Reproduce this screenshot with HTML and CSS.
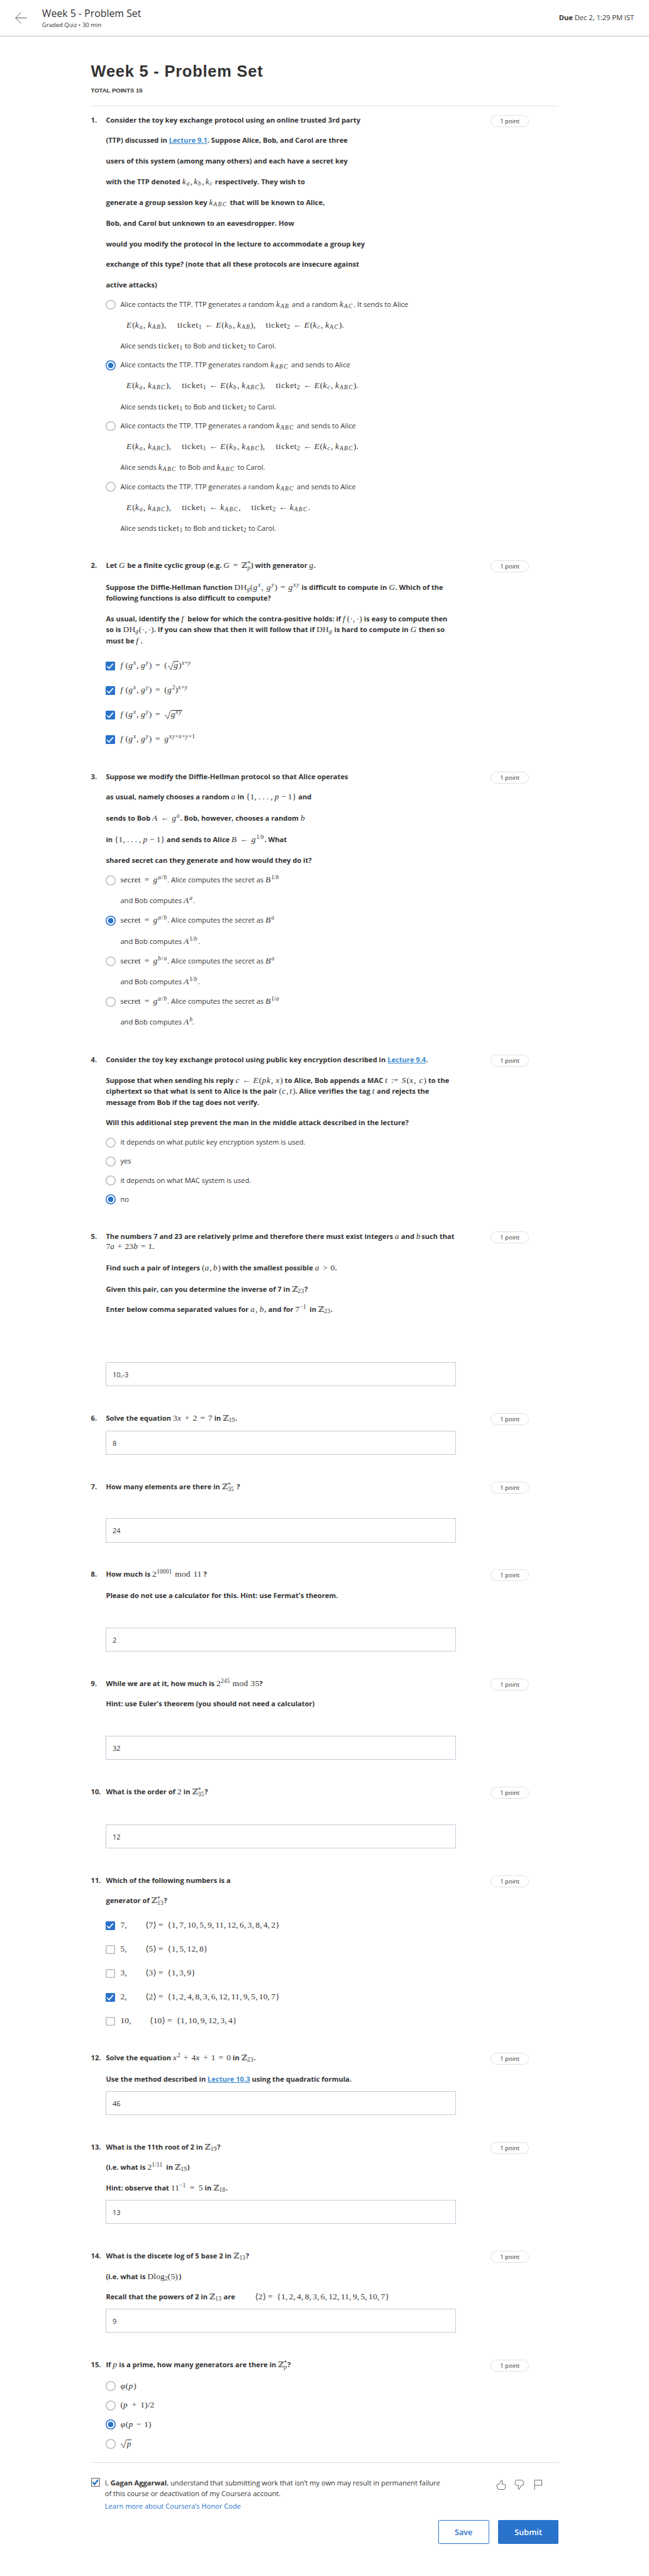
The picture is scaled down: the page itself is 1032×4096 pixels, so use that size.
FILE: index.html
```html
<!DOCTYPE html>
<html lang="en">
<head>
<meta charset="utf-8">
<title>Week 5 - Problem Set</title>
<link rel="stylesheet" href="styles.css">
</head>
<body>
<svg class="defs" width="0" height="0" aria-hidden="true">
  <symbol id="tick" viewBox="0 0 18 18"><path d="M2.8 9.4l4 4.2 8-9.4" fill="none" stroke="#fff" stroke-width="2.1"/></symbol>
  <symbol id="root" viewBox="0 0 13 19"><path d="M1 11.500l2.200-1.600 4 8.100L12.800.6" fill="none" stroke="#333" stroke-width="1"/></symbol>
</svg>
<header class="top">
  <svg class="back" viewBox="0 0 24 24"><path d="M12 .8L1 12l11 11.200M1 12h23" fill="none" stroke="#55585e" stroke-width="1.200"/></svg>
  <div class="crumb"><div class="name">Week 5 - Problem Set</div><div class="kind">Graded Quiz • 30 min</div></div>
  <div class="due"><b>Due</b> Dec 2, 1:29 PM IST</div>
</header>
<main class="page">
<h1>Week 5 - Problem Set</h1>
<div class="total">TOTAL POINTS 15</div>
<hr class="rule">

<section class="q h891 first"><div class="num">1.</div><div class="body">
<div class="l">Consider the toy key exchange protocol using an online trusted 3rd party</div>
<div class="l g20">(TTP) discussed in <a>Lecture 9.1</a>. Suppose Alice, Bob, and Carol are three</div>
<div class="l g20">users of this system (among many others) and each have a secret key</div>
<div class="l g20">with the TTP denoted <span class="m j w62"><i>k<sub>a</sub></i>, <i>k<sub>b</sub></i>, <i>k<sub>c</sub></i></span> respectively. They wish to</div>
<div class="l g21">generate a group session key <span class="m w38"><i>k<sub>ABC</sub></i></span> that will be known to Alice,</div>
<div class="l g21">Bob, and Carol but unknown to an eavesdropper. How</div>
<div class="l g20">would you modify the protocol in the lecture to accommodate a group key</div>
<div class="l g20">exchange of this type? (note that all these protocols are insecure against</div>
<div class="l g20">active attacks)</div>
<div class="o g18"><span class="radio"></span>Alice contacts the TTP. TTP generates a random <span class="m w28"><i>k<sub>AB</sub></i></span> and a random <span class="m w28"><i>k<sub>AC</sub></i></span>. It sends to Alice</div>
<div class="o eq g21"><span class="m w102"><i>E</i>(<i>k<sub>a</sub></i>, <i>k<sub>AB</sub></i>),</span><span class="m w55">ticket<sub>1</sub></span><span class="m w22">←</span><span class="m w100"><i>E</i>(<i>k<sub>b</sub></i>, <i>k<sub>AB</sub></i>),</span><span class="m w55">ticket<sub>2</sub></span><span class="m w22">←</span><span class="m"><i>E</i>(<i>k<sub>c</sub></i>, <i>k<sub>AC</sub></i>).</span></div>
<div class="o in g20">Alice sends <span class="m w49">ticket<sub>1</sub></span> to Bob and <span class="m w49">ticket<sub>2</sub></span> to Carol.</div>
<div class="o g17"><span class="radio on"></span>Alice contacts the TTP. TTP generates random <span class="m w38"><i>k<sub>ABC</sub></i></span> and sends to Alice</div>
<div class="o eq g21"><span class="m w111"><i>E</i>(<i>k<sub>a</sub></i>, <i>k<sub>ABC</sub></i>),</span><span class="m w55">ticket<sub>1</sub></span><span class="m w22">←</span><span class="m w111"><i>E</i>(<i>k<sub>b</sub></i>, <i>k<sub>ABC</sub></i>),</span><span class="m w55">ticket<sub>2</sub></span><span class="m w22">←</span><span class="m"><i>E</i>(<i>k<sub>c</sub></i>, <i>k<sub>ABC</sub></i>).</span></div>
<div class="o in g21">Alice sends <span class="m w49">ticket<sub>1</sub></span> to Bob and <span class="m w49">ticket<sub>2</sub></span> to Carol.</div>
<div class="o g17"><span class="radio"></span>Alice contacts the TTP. TTP generates a random <span class="m w38"><i>k<sub>ABC</sub></i></span> and sends to Alice</div>
<div class="o eq g21"><span class="m w111"><i>E</i>(<i>k<sub>a</sub></i>, <i>k<sub>ABC</sub></i>),</span><span class="m w55">ticket<sub>1</sub></span><span class="m w22">←</span><span class="m w111"><i>E</i>(<i>k<sub>b</sub></i>, <i>k<sub>ABC</sub></i>),</span><span class="m w55">ticket<sub>2</sub></span><span class="m w22">←</span><span class="m"><i>E</i>(<i>k<sub>c</sub></i>, <i>k<sub>ABC</sub></i>).</span></div>
<div class="o in g20">Alice sends <span class="m w38"><i>k<sub>ABC</sub></i></span> to Bob and <span class="m w38"><i>k<sub>ABC</sub></i></span> to Carol.</div>
<div class="o g18"><span class="radio"></span>Alice contacts the TTP. TTP generates a random <span class="m w38"><i>k<sub>ABC</sub></i></span> and sends to Alice</div>
<div class="o eq g21"><span class="m w111"><i>E</i>(<i>k<sub>a</sub></i>, <i>k<sub>ABC</sub></i>),</span><span class="m w55">ticket<sub>1</sub></span><span class="m w22">←</span><span class="m w62"><i>k<sub>ABC</sub></i>,</span><span class="m w55">ticket<sub>2</sub></span><span class="m w22">←</span><span class="m"><i>k<sub>ABC</sub></i>.</span></div>
<div class="o in g20">Alice sends <span class="m w49">ticket<sub>1</sub></span> to Bob and <span class="m w49">ticket<sub>2</sub></span> to Carol.</div>
</div><div class="pt">1 point</div></section>

<section class="q h423"><div class="num">2.</div><div class="body">
<div class="l">Let <span class="m w13"><i>G</i></span> be a finite cyclic group (e.g. <span class="m j w55"><i>G</i> = <span><span class="zz">ℤ</span><span class="ss"><span>*</span><i>p</i></span></span></span>) with generator <span class="m w9"><i>g</i></span>.</div>
<div class="l g23">Suppose the Diffie-Hellman function <span class="m j w131">DH<sub><i>g</i></sub>(<i>g<sup>x</sup></i>, <i>g<sup>y</sup></i>) = <i>g<sup>xy</sup></i></span> is difficult to compute in <span class="m w13"><i>G</i></span>. Which of the</div>
<div class="l g1">following functions is also difficult to compute?</div>
<div class="l g20">As usual, identify the <span class="m w9"><i>f</i></span> below for which the contra-positive holds: if <span class="m j w39"><i>f</i> (·, ·)</span> is easy to compute then</div>
<div class="l g1">so is <span class="m j w62">DH<sub><i>g</i></sub>(·, ·)</span>. If you can show that then it will follow that if <span class="m w32">DH<sub><i>g</i></sub></span> is hard to compute in <span class="m w13"><i>G</i></span> then so</div>
<div class="l g1">must be <span class="m w9"><i>f</i></span>.</div>
<div class="o g29"><span class="box on"><svg><use href="#tick"/></svg></span><span class="m j fn"><i>f</i> (<i>g<sup>x</sup></i>, <i>g<sup>y</sup></i>)</span><span class="m w18">=</span><span class="m">(<svg class="rt"><use href="#root"/></svg><i class="bar">g</i>)<sup><i>x</i>+<i>y</i></sup></span></div>
<div class="o g28"><span class="box on"><svg><use href="#tick"/></svg></span><span class="m j fn"><i>f</i> (<i>g<sup>x</sup></i>, <i>g<sup>y</sup></i>)</span><span class="m w18">=</span><span class="m">(<i>g</i><sup>2</sup>)<sup><i>x</i>+<i>y</i></sup></span></div>
<div class="o g28"><span class="box on"><svg><use href="#tick"/></svg></span><span class="m j fn"><i>f</i> (<i>g<sup>x</sup></i>, <i>g<sup>y</sup></i>)</span><span class="m w18">=</span><span class="m"><svg class="rt"><use href="#root"/></svg><i class="bar">g<sup>xy</sup></i></span></div>
<div class="o g28"><span class="box on"><svg><use href="#tick"/></svg></span><span class="m j fn"><i>f</i> (<i>g<sup>x</sup></i>, <i>g<sup>y</sup></i>)</span><span class="m w18">=</span><span class="m"><i>g</i><sup><i>xy</i>+<i>x</i>+<i>y</i>+1</sup></span></div>
</div><div class="pt">1 point</div></section>

<section class="q h567"><div class="num">3.</div><div class="body">
<div class="l">Suppose we modify the Diffie-Hellman protocol so that Alice operates</div>
<div class="l g20">as usual, namely chooses a random <span class="m w9"><i>a</i></span> in <span class="m j w101">{1, . . . , <i>p</i> − 1}</span> and</div>
<div class="l g21">sends to Bob <span class="m j w56"><i>A</i> ← <i>g<sup>a</sup></i></span>. Bob, however, chooses a random <span class="m"><i>b</i></span></div>
<div class="l g22">in <span class="m j w101">{1, . . . , <i>p</i> − 1}</span> and sends to Alice <span class="m j w66"><i>B</i> ← <i>g</i><sup>1/<i>b</i></sup></span>. What</div>
<div class="l g21">shared secret can they generate and how would they do it?</div>
<div class="o g18"><span class="radio"></span><span class="m j w94">secret = <i>g<sup>a/b</sup></i></span>. Alice computes the secret as <span class="m"><i>B</i><sup>1/<i>b</i></sup></span></div>
<div class="o in g21">and Bob computes <span class="m w19"><i>A<sup>a</sup></i></span>.</div>
<div class="o g18"><span class="radio on"></span><span class="m j w94">secret = <i>g<sup>a/b</sup></i></span>. Alice computes the secret as <span class="m"><i>B<sup>a</sup></i></span></div>
<div class="o in g21">and Bob computes <span class="m w29"><i>A</i><sup>1/<i>b</i></sup></span>.</div>
<div class="o g18"><span class="radio"></span><span class="m j w94">secret = <i>g<sup>b/a</sup></i></span>. Alice computes the secret as <span class="m"><i>B<sup>a</sup></i></span></div>
<div class="o in g21">and Bob computes <span class="m w29"><i>A</i><sup>1/<i>b</i></sup></span>.</div>
<div class="o g18"><span class="radio"></span><span class="m j w94">secret = <i>g<sup>a/b</sup></i></span>. Alice computes the secret as <span class="m"><i>B</i><sup>1/<i>a</i></sup></span></div>
<div class="o in g21">and Bob computes <span class="m w17"><i>A<sup>b</sup></i></span>.</div>
</div><div class="pt">1 point</div></section>

<section class="q h353"><div class="num">4.</div><div class="body">
<div class="l">Consider the toy key exchange protocol using public key encryption described in <a>Lecture 9.4</a>.</div>
<div class="l g20">Suppose that when sending his reply <span class="m j w95"><i>c</i> ← <i>E</i>(<i>pk</i>, <i>x</i>)</span> to Alice, Bob appends a MAC <span class="m j w83"><i>t</i> := <i>S</i>(<i>x</i>, <i>c</i>)</span> to the</div>
<div class="l g1">ciphertext so that what is sent to Alice is the pair <span class="m j w33">(<i>c</i>, <i>t</i>)</span>. Alice verifies the tag <span class="m w6"><i>t</i></span> and rejects the</div>
<div class="l g1">message from Bob if the tag does not verify.</div>
<div class="l g20">Will this additional step prevent the man in the middle attack described in the lecture?</div>
<div class="o g18"><span class="radio"></span>it depends on what public key encryption system is used.</div>
<div class="o g17"><span class="radio"></span>yes</div>
<div class="o g17"><span class="radio"></span>it depends on what MAC system is used.</div>
<div class="o g17"><span class="radio on"></span>no</div>
</div><div class="pt">1 point</div></section>

<section class="q h364"><div class="num">5.</div><div class="body">
<div class="l">The numbers 7 and 23 are relatively prime and therefore there must exist integers <span class="m w9"><i>a</i></span> and <span class="m w7"><i>b</i></span> such that</div>
<div class="l"><span class="m j w93">7<i>a</i> + 23<i>b</i> = 1</span>.</div>
<div class="l g22">Find such a pair of integers <span class="m j w37">(<i>a</i>, <i>b</i>)</span> with the smallest possible <span class="m j w40"><i>a</i> &gt; 0</span>.</div>
<div class="l g21">Given this pair, can you determine the inverse of 7 in <span class="m w25"><span class="zz">ℤ</span><sub>23</sub></span>?</div>
<div class="l g20">Enter below comma separated values for <span class="m j w28"><i>a</i>, <i>b</i></span>, and for <span class="m w25">7<sup>−1</sup></span> in <span class="m w25"><span class="zz">ℤ</span><sub>23</sub></span>.</div>
<div class="field g94">10,-3</div>
</div><div class="pt">1 point</div></section>

<section class="q h137"><div class="num">6.</div><div class="body">
<div class="l">Solve the equation <span class="m j w79">3<i>x</i> + 2 = 7</span> in <span class="m w25"><span class="zz">ℤ</span><sub>19</sub></span>.</div>
<div class="field g14">8</div>
</div><div class="pt">1 point</div></section>

<section class="q h176"><div class="num">7.</div><div class="body">
<div class="l">How many elements are there in <span class="m w26"><span class="zz">ℤ</span><span class="ss"><span>*</span><span>35</span></span></span> ?</div>
<div class="field g53">24</div>
</div><div class="pt">1 point</div></section>

<section class="q h218"><div class="num">8.</div><div class="body">
<div class="l">How much is <span class="m j w99">2<sup>10001</sup> mod 11</span> ?</div>
<div class="l g21">Please do not use a calculator for this. Hint: use Fermat's theorem.</div>
<div class="field g53">2</div>
</div><div class="pt">1 point</div></section>

<section class="q h217"><div class="num">9.</div><div class="body">
<div class="l">While we are at it, how much is <span class="m j w86">2<sup>245</sup> mod 35</span>?</div>
<div class="l g20">Hint: use Euler's theorem (you should not need a calculator)</div>
<div class="field g53">32</div>
</div><div class="pt">1 point</div></section>

<section class="q h177"><div class="num">10.</div><div class="body">
<div class="l">What is the order of <span class="m w9">2</span> in <span class="m w25"><span class="zz">ℤ</span><span class="ss"><span>*</span><span>35</span></span></span>?</div>
<div class="field g54">12</div>
</div><div class="pt">1 point</div></section>

<section class="q h356"><div class="num">11.</div><div class="body">
<div class="l">Which of the following numbers is a</div>
<div class="l g20">generator of <span class="m w25"><span class="zz">ℤ</span><span class="ss"><span>*</span><span>13</span></span></span>?</div>
<div class="o g28"><span class="box on"><svg><use href="#tick"/></svg></span><span class="m w50">7,</span><span class="m w26">⟨7⟩</span><span class="m w18">=</span><span class="m j w225">{1, 7, 10, 5, 9, 11, 12, 6, 3, 8, 4, 2}</span></div>
<div class="o g27"><span class="box"></span><span class="m w50">5,</span><span class="m w26">⟨5⟩</span><span class="m w18">=</span><span class="m j w81">{1, 5, 12, 8}</span></div>
<div class="o g27"><span class="box"></span><span class="m w50">3,</span><span class="m w26">⟨3⟩</span><span class="m w18">=</span><span class="m j w56">{1, 3, 9}</span></div>
<div class="o g27"><span class="box on"><svg><use href="#tick"/></svg></span><span class="m w50">2,</span><span class="m w26">⟨2⟩</span><span class="m w18">=</span><span class="m j w225">{1, 2, 4, 8, 3, 6, 12, 11, 9, 5, 10, 7}</span></div>
<div class="o g27"><span class="box"></span><span class="m w59">10,</span><span class="m w35">⟨10⟩</span><span class="m w18">=</span><span class="m j w121">{1, 10, 9, 12, 3, 4}</span></div>
</div><div class="pt">1 point</div></section>

<section class="q h178"><div class="num">12.</div><div class="body">
<div class="l">Solve the equation <span class="m j w116"><i>x</i><sup>2</sup> + 4<i>x</i> + 1 = 0</span> in <span class="m w25"><span class="zz">ℤ</span><sub>23</sub></span>.</div>
<div class="l g21">Use the method described in <a>Lecture 10.3</a> using the quadratic formula.</div>
<div class="field g13">46</div>
</div><div class="pt">1 point</div></section>

<section class="q h218"><div class="num">13.</div><div class="body">
<div class="l">What is the 11th root of 2 in <span class="m w25"><span class="zz">ℤ</span><sub>19</sub></span>?</div>
<div class="l g20">(i.e. what is <span class="m w34">2<sup>1/11</sup></span> in <span class="m w25"><span class="zz">ℤ</span><sub>19</sub></span>)</div>
<div class="l g20">Hint: observe that <span class="m j w64">11<sup>−1</sup> = 5</span> in <span class="m w25"><span class="zz">ℤ</span><sub>18</sub></span>.</div>
<div class="field g13">13</div>
</div><div class="pt">1 point</div></section>

<section class="q h218"><div class="num">14.</div><div class="body">
<div class="l">What is the discete log of 5 base 2 in <span class="m w25"><span class="zz">ℤ</span><sub>13</sub></span>?</div>
<div class="l g20">(i.e. what is <span class="m w63">Dlog<sub>2</sub>(5)</span>)</div>
<div class="l g20">Recall that the powers of 2 in <span class="m w25"><span class="zz">ℤ</span><sub>13</sub></span> are <span class="m quad w26">⟨2⟩</span><span class="m w18">=</span><span class="m j w225">{1, 2, 4, 8, 3, 6, 12, 11, 9, 5, 10, 7}</span></div>
<div class="field g13">9</div>
</div><div class="pt">1 point</div></section>

<section class="q h205"><div class="num">15.</div><div class="body">
<div class="l">If <span class="m w9"><i>p</i></span> is a prime, how many generators are there in <span class="m w19"><span class="zz">ℤ</span><span class="ss"><span>*</span><i>p</i></span></span>?</div>
<div class="o g21"><span class="radio"></span><span class="m"><i>φ</i>(<i>p</i>)</span></div>
<div class="o g18"><span class="radio"></span><span class="m j w68">(<i>p</i> + 1)/2</span></div>
<div class="o g17"><span class="radio on"></span><span class="m j w62"><i>φ</i>(<i>p</i> − 1)</span></div>
<div class="o g18"><span class="radio"></span><span class="m"><svg class="rt"><use href="#root"/></svg><i class="bar">p</i></span></div>
</div><div class="pt">1 point</div></section>

<hr class="rule end">
<footer class="foot">
  <span class="agree"><svg viewBox="0 0 14 14"><path d="M1.500 7.200l4 4.300 7-9" fill="none" stroke="#2a73cc" stroke-width="3"/></svg></span>
  <div class="pledge">
    <div class="o">I, <b>Gagan Aggarwal</b>, understand that submitting work that isn’t my own may result in permanent failure</div>
    <div class="o g1">of this course or deactivation of my Coursera account.</div>
    <div class="o honor">Learn more about Coursera’s Honor Code</div>
  </div>
  <div class="icons">
    <svg viewBox="0 0 20 20"><path d="M5.500 19.500L2.600 17.600 1 10.700l.9-1.300L6 8.900l4-7.200L10.600.5l1.700 1.100.3 2.100-1.100 4.800 6.200.9 1.200 1.600-1.400 6.800-1.700 1.700z"/></svg>
    <svg viewBox="0 0 20 20"><path d="M14.500.5l2.900 1.900L19 9.300l-.9 1.300-4.100.5-4 7.200-.6 1.200-1.700-1.100-.3-2.100 1.100-4.800-6.200-.9L1.100 9l1.400-6.800L4.200.5z"/></svg>
    <svg viewBox="0 0 20 20"><path d="M2.500 20V.5h14.500v10.500H2.500"/></svg>
  </div>
</footer>
<div class="acts"><div class="btn">Save</div><div class="btn main">Submit</div></div>
</main>
</body>
</html>
```
FILE: styles.css
```css
/* 1rem is ten design pixels of the 1299px wide layout. */
html { font-size: 7.9443px; }
body { margin: 0; background: #fff; color: #333; font: 1.4rem/2.1rem "Open Sans", "Noto Sans", sans-serif; }
.defs { position: absolute; }
.top { box-sizing: border-box; height: 7.3rem; border-bottom: 1px solid #bdbdbd; display: flex; align-items: center; padding: 0 3rem; }
.back { width: 2.4rem; height: 2.4rem; }
.crumb { margin-left: 3rem; flex: 1; padding-top: .1rem; }
.name { font-size: 2rem; line-height: 2.7rem; }
.kind { font-size: 1.2rem; line-height: 1.7rem; }
.page { width: 93.6rem; margin-left: 18.2rem; }
h1 { margin: 5rem 0 1rem; font: bold 3.2rem/4rem "Liberation Sans", Arial, sans-serif; letter-spacing: .1rem; }
.total { font: bold 1.2rem/1.8rem "Liberation Sans", Arial, sans-serif; }
.rule { margin: 2rem 0 0; border: 0; height: 1px; background: #dfdfdf; }
.rule.end { margin: 0; }

.q { display: flex; align-items: flex-start; }
.q.first { margin-top: 1.8rem; }
.num { width: 3rem; font-weight: 700; }
.body { width: 77rem; }
.pt { box-sizing: border-box; margin-left: auto; margin-right: 5.9rem; width: 7.7rem; height: 2.4rem; border: 1px solid #e1e1e1; border-radius: 1.2rem; text-align: center; font-size: 1.2rem; line-height: 2.2rem; }
.l, .o { height: 2.1rem; white-space: nowrap; }
.l { font-weight: 700; }
.l a { color: #3d8bd0; text-decoration: underline; }
.o { display: flow-root; }
.in { padding-left: 2.9rem; }
.eq { padding-left: 4.1rem; }

.radio, .box { display: inline-block; vertical-align: top; box-shadow: inset 0 0 0 .2rem #bdbdbd; }
.radio { width: 2rem; height: 2rem; border-radius: 50%; margin: .1rem .9rem 0 0; }
.radio.on { box-shadow: inset 0 0 0 .2rem #2a73cc; background: radial-gradient(circle, #2a73cc .5rem, #fff .59rem); }
.box { width: 1.8rem; height: 1.8rem; border-radius: .2rem; margin: .2rem 1.1rem 0 0; }
.box.on { box-shadow: none; background: #2a73cc; }
.box svg { display: block; width: 1.8rem; height: 1.8rem; }

/* Formulas */
.m { display: inline-block; font: 400 1.7rem/2rem "Liberation Serif", "DejaVu Serif", serif; height: 2rem; white-space: nowrap; letter-spacing: .01em; }
.m i { letter-spacing: .07em; }
.j { text-align: justify; text-align-last: justify; word-spacing: -.2rem; }
.m sub, .m sup { font-size: 1.2rem; line-height: 0; }
.m sub { vertical-align: -.3rem; }
.m i sub { letter-spacing: .14em; }
.m sup { vertical-align: .6rem; }
.w49, .w55 { letter-spacing: .045em; }
.zz { font: 1.6rem/0 "DejaVu Serif", serif; }
.ss { display: inline-flex; flex-direction: column; font-size: 1.2rem; line-height: .9rem; vertical-align: .5rem; }
.rt { width: 1.3rem; height: 1.9rem; vertical-align: -.5rem; }
.bar { border-top: 1px solid #333; line-height: 1.4rem; display: inline-block; height: 1.4rem; vertical-align: top; margin-top: .15rem; }
.fn { width: 6.3rem; margin-right: .7rem; }
.quad { margin-left: 3.6rem; }

.field { box-sizing: border-box; width: 70rem; height: 4.8rem; border: 1px solid #c7cbd8; padding-left: 1.2rem; line-height: 4.8rem; }

.foot { display: flex; padding-top: 3rem; height: 8.4rem; }
.agree { box-sizing: border-box; width: 1.8rem; height: 1.8rem; border: 1px solid #666; background: #f4f4f4; display: flex; align-items: center; justify-content: center; margin-right: 1rem; }
.agree svg { width: 1.4rem; height: 1.4rem; }
.pledge { width: 78.3rem; }
.honor { margin-top: .4rem; color: #2a73cc; }
.icons { display: flex; gap: 1.7rem; margin-top: .4rem; }
.icons svg { width: 2rem; height: 2rem; fill: none; stroke: #5c5f66; stroke-width: 1.2; }
.acts { display: flex; justify-content: flex-end; gap: 1.8rem; }
.btn { box-sizing: border-box; width: 10.2rem; height: 4.9rem; border: 1px solid #2a73cc; border-radius: .2rem; color: #2a73cc; text-align: center; font-size: 1.6rem; line-height: 4.7rem; font-weight: 600; }
.btn.main { width: 12.1rem; background: #2a73cc; color: #fff; }

/* Question heights */
.h137 { height: 13.7rem; } .h176 { height: 17.6rem; } .h177 { height: 17.7rem; } .h178 { height: 17.8rem; }
.h205 { height: 20.5rem; } .h217 { height: 21.7rem; } .h218 { height: 21.8rem; } .h353 { height: 35.3rem; }
.h356 { height: 35.6rem; } .h364 { height: 36.4rem; } .h423 { height: 42.3rem; } .h567 { height: 56.7rem; }
.h891 { height: 89.1rem; }

/* Gaps above lines */
.g1 { margin-top: .1rem; } .g13 { margin-top: 1.3rem; } .g14 { margin-top: 1.4rem; } .g17 { margin-top: 1.7rem; }
.g18 { margin-top: 1.8rem; } .g20 { margin-top: 2rem; } .g21 { margin-top: 2.1rem; } .g22 { margin-top: 2.2rem; }
.g23 { margin-top: 2.3rem; } .g27 { margin-top: 2.7rem; } .g28 { margin-top: 2.8rem; } .g29 { margin-top: 2.9rem; }
.g53 { margin-top: 5.3rem; } .g54 { margin-top: 5.4rem; } .g94 { margin-top: 9.4rem; }

/* Formula widths */
.w6 { width: .6rem; } .w7 { width: .7rem; } .w9 { width: .9rem; } .w13 { width: 1.3rem; } .w17 { width: 1.7rem; }
.w18 { width: 1.8rem; } .w19 { width: 1.9rem; } .w22 { width: 2.2rem; } .w25 { width: 2.5rem; } .w26 { width: 2.6rem; }
.w28 { width: 2.8rem; } .w29 { width: 2.9rem; } .w32 { width: 3.2rem; } .w33 { width: 3.3rem; } .w34 { width: 3.4rem; }
.w35 { width: 3.5rem; } .w37 { width: 3.7rem; } .w38 { width: 3.8rem; } .w39 { width: 3.9rem; } .w40 { width: 4rem; }
.w49 { width: 4.9rem; } .w50 { width: 5rem; } .w55 { width: 5.5rem; } .w56 { width: 5.6rem; } .w59 { width: 5.9rem; }
.w62 { width: 6.2rem; } .w63 { width: 6.3rem; } .w64 { width: 6.4rem; } .w66 { width: 6.6rem; } .w68 { width: 6.8rem; }
.w79 { width: 7.9rem; } .w81 { width: 8.1rem; } .w83 { width: 8.3rem; } .w86 { width: 8.6rem; } .w93 { width: 9.3rem; }
.w94 { width: 9.4rem; } .w95 { width: 9.5rem; } .w99 { width: 9.9rem; } .w100 { width: 10rem; } .w101 { width: 10.1rem; }
.w102 { width: 10.2rem; } .w111 { width: 11.1rem; } .w116 { width: 11.6rem; } .w121 { width: 12.1rem; } .w131 { width: 13.1rem; }
.w225 { width: 22.5rem; }
```
